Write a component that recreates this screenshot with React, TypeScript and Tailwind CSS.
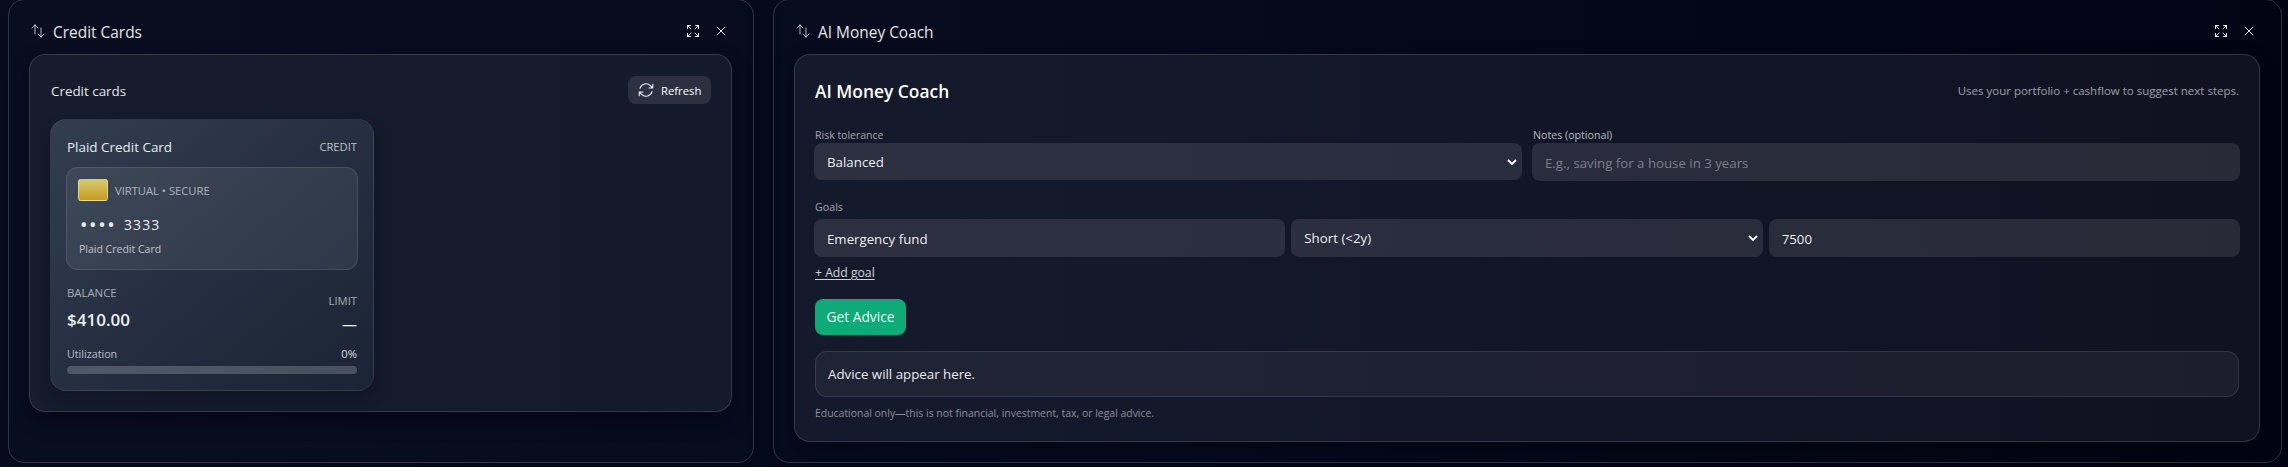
import React from "react";

type IconProps = { d: string; className: string };

function Icon({ d, className }: IconProps) {
  return (
    <svg
      viewBox="0 0 24 24"
      fill="none"
      stroke="currentColor"
      strokeWidth="1.5"
      strokeLinecap="round"
      strokeLinejoin="round"
      className={className}
    >
      <path d={d} />
    </svg>
  );
}

const MOVE = "M3 7.5 7.5 3m0 0L12 7.5M7.5 3v13.5m13.5 0L16.5 21m0 0L12 16.5m4.5 4.5V7.5";
const EXPAND =
  "M3.75 3.75v4.5m0-4.5h4.5m-4.5 0L9 9M3.75 20.25v-4.5m0 4.5h4.5m-4.5 0L9 15M20.25 3.75h-4.5m4.5 0v4.5m0-4.5L15 9m5.25 11.25h-4.5m4.5 0v-4.5m0 4.5L15 15";
const CLOSE = "M6 18 18 6M6 6l12 12";
const REFRESH =
  "M16.023 9.348h4.992v-.001M2.985 19.644v-4.992m0 0h4.992m-4.993 0 3.181 3.183a8.25 8.25 0 0 0 13.803-3.7M4.031 9.865a8.25 8.25 0 0 1 13.803-3.7l3.181 3.182m0-4.991v4.99";

function Panel({ title, className, children }: { title: string; className: string; children: React.ReactNode }) {
  return (
    <section
      className={`-mt-px h-[464px] rounded-2xl border border-white/[0.17] px-5 shadow-[0_8px_24px_rgba(0,0,0,0.35)] ${className}`}
    >
      <header className="flex h-[54px] items-center justify-between pl-px pt-2">
        <div className="flex items-center gap-[7px] text-white/90">
          <Icon d={MOVE} className="size-4 text-white/70" />
          <h2 className="pt-[2px] text-[15.45px] leading-6">{title}</h2>
        </div>
        <div className="flex items-center gap-3 pr-1 text-white/90">
          <Icon d={EXPAND} className="size-4" />
          <Icon d={CLOSE} className="size-4" />
        </div>
      </header>
      {children}
    </section>
  );
}

function SelectBox({ options, className }: { options: string[]; className: string }) {
  return (
    <div className="relative min-w-0 flex-1">
      <select
        defaultValue={options[0]}
        className={`block w-full appearance-none rounded-lg bg-white/10 px-[13px] pt-[2px] text-[13.3px] text-white/95 outline-none ${className}`}
      >
        {options.map((o) => (
          <option key={o}>{o}</option>
        ))}
      </select>
      <svg
        viewBox="0 0 10 7"
        fill="none"
        stroke="currentColor"
        strokeWidth="1.8"
        className="pointer-events-none absolute right-[5px] top-4 h-[7px] w-[10px] text-white"
      >
        <path d="M1 1l4 4 4-4" />
      </svg>
    </div>
  );
}

function CreditCard() {
  return (
    <article className="mt-[15px] h-[272px] w-[324px] rounded-2xl border border-white/[0.06] bg-linear-to-br from-[#323e4f] via-[#252f41] to-[#1b2434] px-4 pt-[17px] shadow-[0_8px_16px_rgba(0,0,0,0.2)]">
      <div className="flex h-5 items-center justify-between">
        <h4 className="text-[13.45px] leading-5 text-white/90">Plaid Credit Card</h4>
        <span className="text-[11.2px] leading-5 text-white/70">CREDIT</span>
      </div>
      <div className="-mx-px mt-[10px] h-[103px] rounded-xl border border-white/10 bg-white/[0.07] px-[11px] pt-[11px]">
        <div className="flex items-center gap-[7px]">
          <span className="h-[22px] w-[30px] rounded-[3px] border border-white/40 bg-linear-to-b from-[#d6c86c] to-[#c99c12]" />
          <span className="pt-px text-[11.2px] leading-[21px] text-white/60">VIRTUAL • SECURE</span>
        </div>
        <div className="mt-[14px] flex h-5 items-center pl-[2px] text-white/90">
          <span className="w-[44px] text-[20px] leading-5 tracking-[1.6px]">••••</span>
          <span className="text-[14px] leading-5 tracking-[1.1px]">3333</span>
        </div>
        <p className="mt-[6px] pl-px text-[10.5px] leading-4 text-white/70">Plaid Credit Card</p>
      </div>
      <div className="mt-[15px] flex items-end justify-between">
        <div>
          <p className="text-[11.35px] leading-4 text-white/60">BALANCE</p>
          <p className="mt-[5px] text-[17px] font-semibold leading-7 text-white/95">$410.00</p>
        </div>
        <div className="text-right">
          <p className="text-[11.25px] leading-4 text-white/60">LIMIT</p>
          <p className="mt-[5px] text-[15px] leading-5 text-white/95">—</p>
        </div>
      </div>
      <div className="mt-3 flex justify-between text-white/70">
        <span className="text-[10.7px] leading-4">Utilization</span>
        <span className="text-[11.2px] leading-4 text-white/80">0%</span>
      </div>
      <div className="mt-1 h-2 rounded-full bg-white/20" />
    </article>
  );
}

const CARD =
  "rounded-2xl border border-white/[0.14] bg-white/[0.06] shadow-[0_8px_20px_rgba(0,0,0,0.35)]";
const FIELD =
  "block h-[38px] w-full min-w-0 rounded-lg bg-white/10 px-[13px] pt-[1px] text-[13.25px] text-white/95 outline-none placeholder:text-white/40";

export default function App() {
  return (
    <main className="flex h-[467px] items-start gap-[19px] overflow-hidden bg-linear-to-r from-[#080d20] via-[#050a1d] to-[#020414] pl-2 font-['Open_Sans','Noto_Sans',sans-serif]">
      <Panel title="Credit Cards" className="w-[746px]">
        <div className={`${CARD} h-[358px] w-[703px] px-5 pt-[21px]`}>
          <div className="flex h-7 items-center justify-between">
            <h3 className="pl-px pt-[2px] text-[13.4px] leading-5 text-white/90">Credit cards</h3>
            <button className="flex h-7 w-[83px] items-center gap-[6px] rounded-lg bg-white/10 pl-[9px] text-white">
              <Icon d={REFRESH} className="size-[18px] shrink-0 text-white/90" />
              <span className="pt-[2px] text-[11.3px] leading-4">Refresh</span>
            </button>
          </div>
          <CreditCard />
        </div>
      </Panel>

      <Panel title="AI Money Coach" className="w-[1509px]">
        <div className={`${CARD} h-[388px] w-[1466px] px-5 pt-[21px]`}>
          <div className="flex h-7 items-center justify-between pt-px">
            <h3 className="text-[17.4px] font-semibold leading-7 text-white">AI Money Coach</h3>
            <p className="text-[11.5px] leading-7 text-white/60">
              Uses your portfolio + cashflow to suggest next steps.
            </p>
          </div>
          <div className="-mx-px mt-[23px] grid grid-cols-2 items-start gap-[10px]">
            <div>
              <label className="block pl-px text-[10.5px] leading-4 text-white/60">Risk tolerance</label>
              <SelectBox options={["Balanced", "Conservative", "Aggressive"]} className="h-[37px]" />
            </div>
            <div>
              <label className="block pl-px text-[10.65px] leading-4 text-white/70">Notes (optional)</label>
              <input placeholder="E.g., saving for a house in 3 years" className={FIELD} />
            </div>
          </div>
          <p className="mt-[18px] text-[10.7px] leading-4 text-white/60">Goals</p>
          <div className="-mx-px mt-1 grid grid-cols-3 gap-[6px]">
            <input defaultValue="Emergency fund" className={FIELD} />
            <SelectBox options={["Short (<2y)", "Medium (2-5y)", "Long (5y+)"]} className="h-[38px]" />
            <input defaultValue="7500" className={FIELD} />
          </div>
          <button className="mt-2 block text-[12.2px] leading-4 text-white/80 underline underline-offset-2">
            + Add goal
          </button>
          <button className="mt-[18px] block h-9 w-[91px] rounded-lg bg-[#10aa79] text-[13.75px] leading-9 text-white/95">
            Get Advice
          </button>
          <div className="mt-4 h-[46px] rounded-xl border border-white/10 bg-white/5 px-3 text-[13.3px] leading-[44px] text-white/90">
            Advice will appear here.
          </div>
          <p className="mt-2 text-[10.45px] leading-4 text-white/50">
            Educational only—this is not financial, investment, tax, or legal advice.
          </p>
        </div>
      </Panel>
    </main>
  );
}
